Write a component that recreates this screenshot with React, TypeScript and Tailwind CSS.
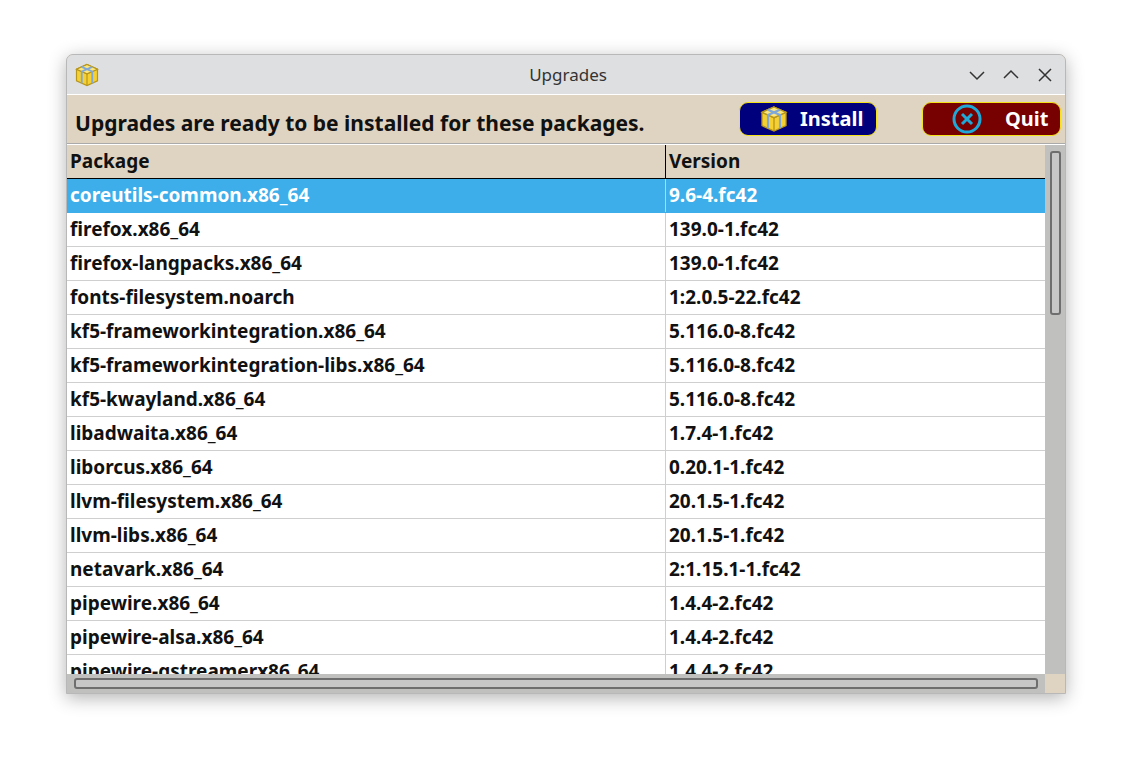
import React from "react";

const rows: [string, string][] = [
  ["coreutils-common.x86_64", "9.6-4.fc42"],
  ["firefox.x86_64", "139.0-1.fc42"],
  ["firefox-langpacks.x86_64", "139.0-1.fc42"],
  ["fonts-filesystem.noarch", "1:2.0.5-22.fc42"],
  ["kf5-frameworkintegration.x86_64", "5.116.0-8.fc42"],
  ["kf5-frameworkintegration-libs.x86_64", "5.116.0-8.fc42"],
  ["kf5-kwayland.x86_64", "5.116.0-8.fc42"],
  ["libadwaita.x86_64", "1.7.4-1.fc42"],
  ["liborcus.x86_64", "0.20.1-1.fc42"],
  ["llvm-filesystem.x86_64", "20.1.5-1.fc42"],
  ["llvm-libs.x86_64", "20.1.5-1.fc42"],
  ["netavark.x86_64", "2:1.15.1-1.fc42"],
  ["pipewire.x86_64", "1.4.4-2.fc42"],
  ["pipewire-alsa.x86_64", "1.4.4-2.fc42"],
  ["pipewire-gstreamerx86_64", "1.4.4-2.fc42"],
];

function Box({ size }: { size: number }) {
  return (
    <svg width={size} height={size} viewBox="0 0 24 24">
      <path d="M12 3 L21 7 L21 17 L12 21 L3 17 L3 7 Z" fill="#f5d030" stroke="#b8961a" strokeWidth="1" />
      <path d="M3 7 L12 11 L21 7" fill="none" stroke="#b8961a" strokeWidth="1" />
      <path d="M12 11 L12 21" stroke="#b8961a" strokeWidth="1" />
      <path d="M12 3 L21 7 L12 11 L3 7 Z" fill="#fbe680" stroke="#b8961a" strokeWidth="1" />
      <path d="M7.5 5 L16.5 9 L16.5 19 M16.5 5 L7.5 9 L7.5 19" fill="none" stroke="#7fa8d8" strokeWidth="1.6" />
    </svg>
  );
}

export default function App() {
  return (
    <div className="w-[1132px] h-[772px] bg-white pt-[54px] pl-[66px]" style={{ fontFamily: '"Noto Sans", sans-serif' }}>
      <div className="w-[1000px] h-[640px] flex flex-col rounded-t-[7px] border border-[#b8b8b8] shadow-[0_4px_18px_rgba(0,0,0,0.3)] overflow-hidden bg-[#dfd4c2]">
        <div className="h-[40px] flex items-center bg-[#dedfe1] border-b border-white px-[6px] shrink-0">
          <Box size={28} />
          <div className="flex-1 text-center text-[17px] text-[#333] ml-[68px]">Upgrades</div>
          <div className="flex items-center gap-[14px] text-[#333] pr-[4px]">
            <svg width="20" height="20" viewBox="0 0 20 20"><path d="M3 7 L10 14 L17 7" fill="none" stroke="#333" strokeWidth="1.5" /></svg>
            <svg width="20" height="20" viewBox="0 0 20 20"><path d="M3 13 L10 6 L17 13" fill="none" stroke="#333" strokeWidth="1.5" /></svg>
            <svg width="20" height="20" viewBox="0 0 20 20"><path d="M4 4 L16 16 M16 4 L4 16" fill="none" stroke="#333" strokeWidth="1.5" /></svg>
          </div>
        </div>
        <div className="h-[49px] flex items-end shrink-0 relative border-b border-[#aaa]">
          <div className="pl-[8px] pb-[4px] text-[21px] font-bold text-[#111]">Upgrades are ready to be installed for these packages.</div>
          <div className="absolute left-[672px] top-[7px] w-[138px] h-[34px] rounded-[9px] bg-[#00007c] border border-[#f4e21a] flex items-center pl-[18px] gap-[10px]">
            <Box size={32} />
            <span className="text-white font-bold text-[20px]">Install</span>
          </div>
          <div className="absolute left-[855px] top-[7px] w-[139px] h-[34px] rounded-[9px] bg-[#770000] border border-[#f4e21a] flex items-center pl-[28px] gap-[22px]">
            <svg width="32" height="32" viewBox="0 0 32 32"><circle cx="16" cy="16" r="13" fill="none" stroke="#1ea8d8" strokeWidth="3" /><path d="M11 11 L21 21 M21 11 L11 21" stroke="#1ea8d8" strokeWidth="3" /></svg>
            <span className="text-white font-bold text-[20px]">Quit</span>
          </div>
        </div>
        <div className="flex flex-1 min-h-0 border-t border-white">
          <div className="flex-1 flex flex-col min-w-0">
            <div className="flex-1 overflow-hidden flex flex-col bg-white">
              <div className="flex h-[34px] shrink-0 bg-[#dfd4c2] border-b border-black text-[19px] font-bold text-[#111]">
                <div className="w-[599px] border-r border-black pl-[3px] flex items-center">Package</div>
                <div className="flex-1 pl-[3px] flex items-center">Version</div>
              </div>
              {rows.map(([p, v], i) => (
                <div key={p} className={`flex h-[34px] shrink-0 text-[19px] font-bold border-b ${i === 0 ? "bg-[#3daee9] text-white border-[#3daee9]" : "text-[#111] border-[#cfcfcf]"}`}>
                  <div className="w-[599px] border-r border-[#cfcfcf] pl-[3px] flex items-center">{p}</div>
                  <div className="flex-1 pl-[3px] flex items-center">{v}</div>
                </div>
              ))}
            </div>
            <div className="h-[19px] shrink-0 bg-[#c0c0bf] flex items-center px-[7px]">
              <div className="h-[11px] w-full rounded-[3px] border-2 border-[#6e6e6e] bg-[#c7c7c7]" />
            </div>
          </div>
          <div className="w-[20px] flex flex-col shrink-0">
            <div className="flex-1 bg-[#c0c0bf] pt-[6px] flex justify-center">
              <div className="w-[11px] h-[164px] rounded-[3px] border-2 border-[#6e6e6e] bg-[#c7c7c7]" />
            </div>
            <div className="h-[19px] bg-[#dfd4c2]" />
          </div>
        </div>
      </div>
    </div>
  );
}
